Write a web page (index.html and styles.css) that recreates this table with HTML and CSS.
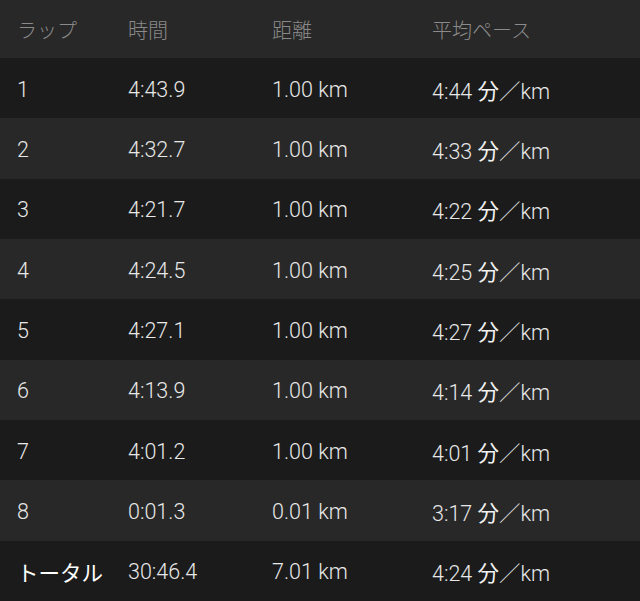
FILE: index.html
```html
<!DOCTYPE html>
<html lang="ja">
<head>
<meta charset="utf-8">
<link rel="stylesheet" href="styles.css">
</head>
<body>
<div class="laps">
  <div class="row head"><span>ラップ</span><span>時間</span><span>距離</span><span>平均ペース</span></div>
  <div class="row odd"><span>1</span><span>4:43.9</span><span>1.00 km</span><span>4:44 <b>分</b>／km</span></div>
  <div class="row even"><span>2</span><span>4:32.7</span><span>1.00 km</span><span>4:33 <b>分</b>／km</span></div>
  <div class="row odd"><span>3</span><span>4:21.7</span><span>1.00 km</span><span>4:22 <b>分</b>／km</span></div>
  <div class="row even"><span>4</span><span>4:24.5</span><span>1.00 km</span><span>4:25 <b>分</b>／km</span></div>
  <div class="row odd"><span>5</span><span>4:27.1</span><span>1.00 km</span><span>4:27 <b>分</b>／km</span></div>
  <div class="row even"><span>6</span><span>4:13.9</span><span>1.00 km</span><span>4:14 <b>分</b>／km</span></div>
  <div class="row odd"><span>7</span><span>4:01.2</span><span>1.00 km</span><span>4:01 <b>分</b>／km</span></div>
  <div class="row even"><span>8</span><span>0:01.3</span><span>0.01 km</span><span>3:17 <b>分</b>／km</span></div>
  <div class="row odd total"><span class="label">トータル</span><span>30:46.4</span><span>7.01 km</span><span>4:24 <b>分</b>／km</span></div>
</div>
</body>
</html>
```
FILE: styles.css
```css
html, body {
  margin: 0;
  padding: 0;
  background: #1b1b1b;
}
.laps {
  width: 640px;
  height: 601px;
  display: flex;
  flex-direction: column;
  font-family: Roboto, "Noto Sans CJK JP", sans-serif;
  font-weight: 300;
  font-size: 21.5px;
  color: #e8e8e8;
}
.row {
  display: grid;
  grid-template-columns: 111px 144px 160px 1fr;
  align-items: center;
  padding-left: 17px;
  height: 60.333px;
  box-sizing: border-box;
  padding-top: 2px;
}
.row.head {
  height: 58px;
  padding-top: 0;
  background: #282828;
  color: #8a8a8a;
  font-family: "Noto Sans CJK JP", sans-serif;
  font-weight: 300;
  font-size: 20px;
}
.row.odd { background: #1b1b1b; }
.row.even { background: #282828; }
.row b {
  font-family: "Noto Sans CJK JP", sans-serif;
  font-weight: 400;
  color: #f2f2f2;
}
.row.total .label {
  font-family: "Noto Sans CJK JP", sans-serif;
  font-weight: 400;
  color: #ffffff;
}
```
